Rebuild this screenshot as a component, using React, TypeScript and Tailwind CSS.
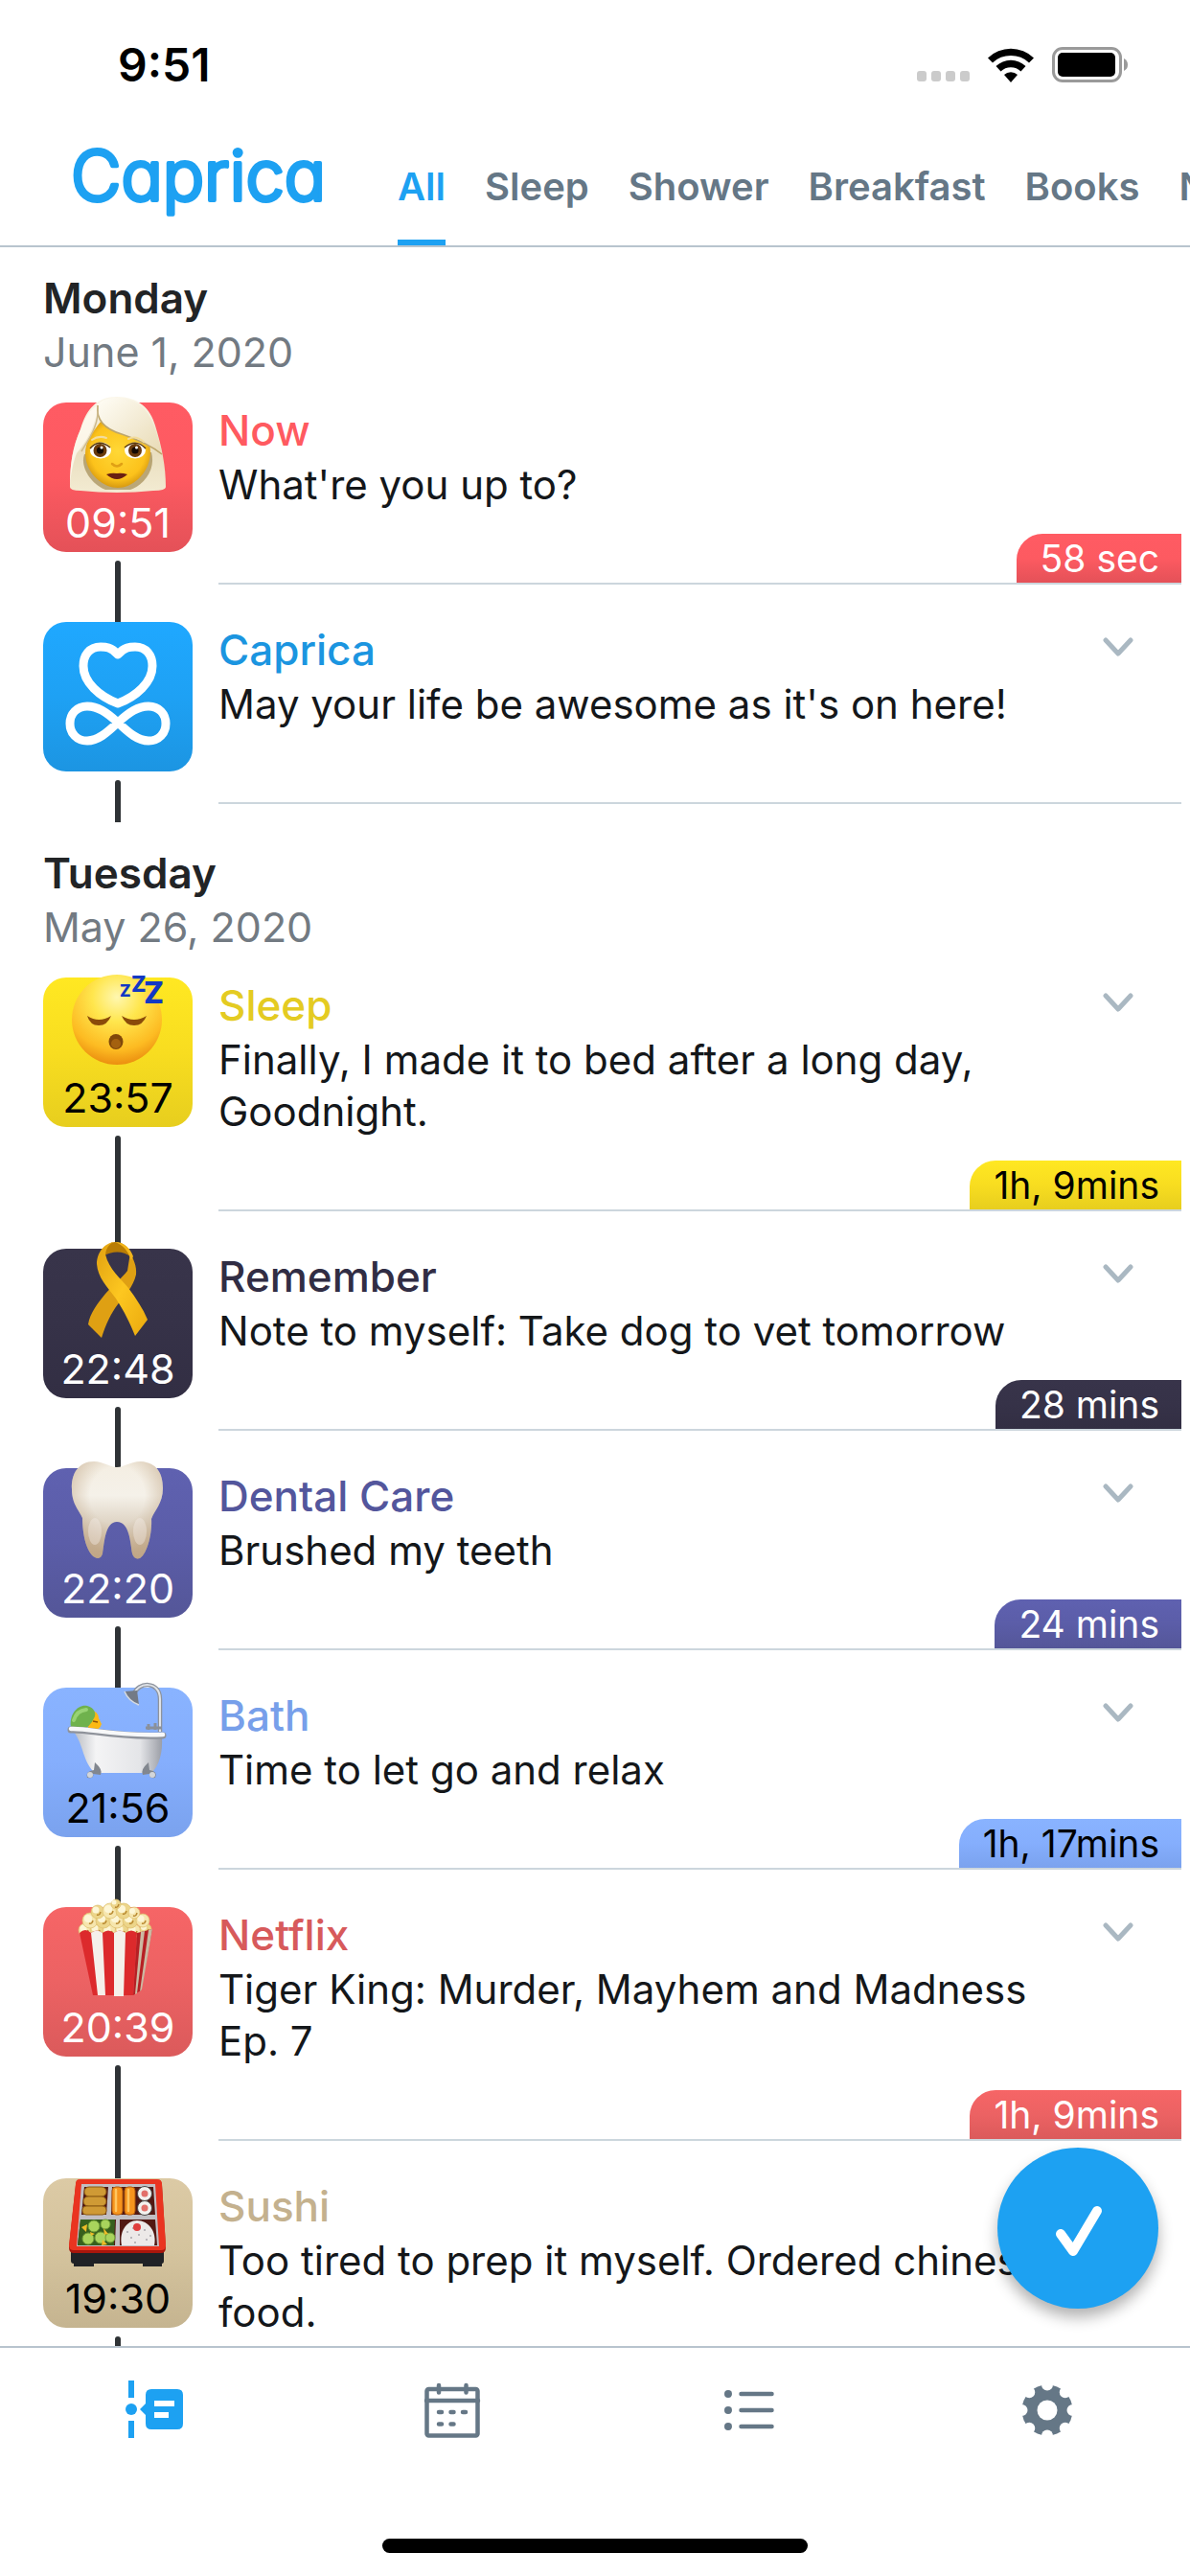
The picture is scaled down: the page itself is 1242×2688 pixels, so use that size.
import React from "react";

type Entry = {
  title: string;
  text: string;
  time?: string;
  badge?: string;
  tile: string;
  titleColor: string;
  expandable?: boolean;
  art: React.ReactNode;
};

const art = "relative -mt-1.5 h-[102px] w-[102px] overflow-visible";

function Woman() {
  return (
    <svg viewBox="0 0 102 102" className={art} aria-hidden="true">
      <defs>
        <linearGradient id="hair" x1="0" y1="0" x2="0" y2="1">
          <stop offset="0" stopColor="#fbf7ea" />
          <stop offset="0.6" stopColor="#eadfc0" />
          <stop offset="1" stopColor="#f3ebd2" />
        </linearGradient>
        <radialGradient id="skin" cx="0.5" cy="0.45" r="0.6">
          <stop offset="0" stopColor="#ffd836" />
          <stop offset="0.7" stopColor="#fcc21b" />
          <stop offset="1" stopColor="#c98a0c" />
        </radialGradient>
        <linearGradient id="fringe" x1="0" y1="0" x2="1" y2="1">
          <stop offset="0" stopColor="#fffdf6" />
          <stop offset="1" stopColor="#e8dab4" />
        </linearGradient>
      </defs>
      <path d="M50 0C72 0 85 12 90 30C97 53 101 72 101 94Q101 98 88 98Q50 102 12 98Q1 98 1 94C1 70 4 52 12 34C18 13 29 0 50 0Z" fill="url(#hair)" />
      <path d="M16 60C11 75 25 92 38 97L64 97C78 92 91 76 86 58Z" fill="#9c8449" opacity="0.65" />
      <path d="M33 26C24 38 17 46 17 60C18 82 37 95 51 95C65 95 83 82 85 60C85 52 84 48 83 43C60 40 43 35 33 26Z" fill="url(#skin)" />
      <path d="M30 9C29 24 22 43 8 59C5 66 2 80 1 92C1 70 4 52 12 34C17 21 22 13 30 9Z" fill="#fffaf0" opacity="0.8" />
      <path d="M30 8C38 -2 65 -2 78 12C89 25 94 44 97 61C88 53 70 44 55 39C39 34 28 24 30 8Z" fill="url(#fringe)" />
      <path d="M30 9C28 24 38 34 55 39C70 44 86 51 97 60" fill="none" stroke="#bda66b" strokeWidth="1.5" />
      <path d="M30 9C32 30 20 45 13 57" fill="none" stroke="#cdb98b" strokeWidth="1.5" />
      <path d="M24 45Q31 40 39 43M62 44Q70 40 78 47" fill="none" stroke="#f3dc9c" strokeWidth="2" strokeLinecap="round" />
      <ellipse cx="33" cy="56" rx="11" ry="8.5" fill="#fff" />
      <ellipse cx="69" cy="56" rx="11" ry="8.5" fill="#fff" />
      <circle cx="32.500" cy="56" r="7" fill="#6b3b0c" />
      <circle cx="69" cy="56" r="7" fill="#6b3b0c" />
      <circle cx="32.500" cy="56" r="3.600" fill="#150a03" />
      <circle cx="69" cy="56" r="3.600" fill="#150a03" />
      <circle cx="34" cy="53" r="1.500" fill="#fff" />
      <circle cx="70.500" cy="53" r="1.500" fill="#fff" />
      <path d="M22 54Q31 43 43 53M58 53Q70 43 80 54" fill="none" stroke="#5a3a0d" strokeWidth="1.500" />
      <path d="M45 70Q50 75 55 70" fill="none" stroke="#e0a015" strokeWidth="2.500" strokeLinecap="round" />
      <path d="M39 81Q45 79 50 80Q55 79 61 81Q50 91 39 81Z" fill="#6a1f12" />
    </svg>
  );
}

function Sleeping() {
  return (
    <svg viewBox="0 0 102 102" className={art} aria-hidden="true">
      <defs>
        <radialGradient id="face" cx="0.5" cy="0.25" r="0.78">
          <stop offset="0" stopColor="#fff7b0" />
          <stop offset="0.35" stopColor="#ffe64d" />
          <stop offset="0.75" stopColor="#fdbb22" />
          <stop offset="1" stopColor="#e8870c" />
        </radialGradient>
      </defs>
      <circle cx="50" cy="50" r="47" fill="url(#face)" />
      <path d="M19 46Q31 54 44 46Q40 56 31 56Q22 56 19 46Z" fill="#8a4b0a" />
      <path d="M55 46Q68 54 81 46Q77 56 68 56Q59 56 55 46Z" fill="#8a4b0a" />
      <ellipse cx="49" cy="73" rx="7.500" ry="8" fill="#80470a" />
      <ellipse cx="49" cy="75" rx="5" ry="5" fill="#a4610f" />
      <g fill="#1238c4" fontFamily="Inter, sans-serif" fontWeight="800">
        <text x="53" y="26" fontSize="17">Z</text>
        <text x="65" y="21" fontSize="23">Z</text>
        <text x="78" y="33" fontSize="31">Z</text>
      </g>
    </svg>
  );
}

function Ribbon() {
  return (
    <svg viewBox="0 0 102 102" className={art} aria-hidden="true">
      <defs>
        <linearGradient id="band" x1="0" y1="0" x2="1" y2="1">
          <stop offset="0" stopColor="#e0a010" />
          <stop offset="0.5" stopColor="#fdc720" />
          <stop offset="1" stopColor="#eaa90e" />
        </linearGradient>
      </defs>
      <path d="M37 11C39 2 43 -1 48 -1C57 -1 64 5 65 15C57 8 46 8 37 13Z" fill="#b97d05" />
      <path d="M64 10C67 17 71 24 70 33C67 46 58 55 51 64C44 73 38 86 34 99L20 85C22 73 30 63 38 53C46 44 55 37 61 29Z" fill="#dfa013" />
      <path d="M48 -1C36 0 29 11 29 22C30 36 40 46 49 58C58 72 64 84 69 97L82 80C77 68 70 58 62 47C54 37 42 28 38 12C39 4 43 0 48 -1Z" fill="url(#band)" />
      <path d="M48 -1C58 -1 64 6 67 14L65 18C61 7 56 2 48 -1Z" fill="#f2b51b" />
    </svg>
  );
}

function Tooth() {
  return (
    <svg viewBox="0 0 102 102" className={art} aria-hidden="true">
      <defs>
        <linearGradient id="enamel" x1="0" y1="0" x2="0" y2="1">
          <stop offset="0" stopColor="#f4eee2" />
          <stop offset="0.35" stopColor="#f5f1e9" />
          <stop offset="0.65" stopColor="#ddd2c2" />
          <stop offset="1" stopColor="#c9b296" />
        </linearGradient>
        <radialGradient id="crown" cx="0.5" cy="0.35" r="0.6">
          <stop offset="0.5" stopColor="#b89b78" stopOpacity="0" />
          <stop offset="1" stopColor="#b89b78" stopOpacity="0.55" />
        </radialGradient>
      </defs>
      <path d="M26 -1C36 -1 42 5 50 5C58 5 64 -1 75 -1C92 0 98 12 98 27C98 43 89 50 86 59C87 73 82 95 74 100Q68 102 66 95C64 83 63 62 50 62C38 62 37 83 35 95Q33 102 27 99C18 94 14 74 14 58C11 50 3 44 3 28C2 12 10 -1 26 -1Z" fill="url(#enamel)" />
      <path d="M26 -1C36 -1 42 5 50 5C58 5 64 -1 75 -1C92 0 98 12 98 27C98 43 89 50 86 59C87 73 82 95 74 100Q68 102 66 95C64 83 63 62 50 62C38 62 37 83 35 95Q33 102 27 99C18 94 14 74 14 58C11 50 3 44 3 28C2 12 10 -1 26 -1Z" fill="url(#crown)" />
      <ellipse cx="27" cy="72" rx="7" ry="14" fill="#f4eee8" opacity="0.4" />
      <ellipse cx="74" cy="72" rx="7" ry="14" fill="#f4eee8" opacity="0.4" />
    </svg>
  );
}

function Bathtub() {
  return (
    <svg viewBox="0 0 102 102" className={art} aria-hidden="true">
      <defs>
        <linearGradient id="tub" x1="0" y1="0" x2="1" y2="0">
          <stop offset="0" stopColor="#b9bcc2" />
          <stop offset="0.25" stopColor="#f4f4f5" />
          <stop offset="0.75" stopColor="#e4e5e8" />
          <stop offset="1" stopColor="#9b9ea6" />
        </linearGradient>
      </defs>
      <path d="M95 52V18C95 -2 71 0 68 13" fill="none" stroke="#8d939d" strokeWidth="4.500" />
      <path d="M95 52V18C95 -2 71 0 68 13" fill="none" stroke="#dfe3e8" strokeWidth="2" />
      <path d="M58 10L71 9L73 24Q62 20 58 10Z" fill="#737a86" />
      <path d="M58 10Q62 20 73 24" fill="none" stroke="#d5dae0" strokeWidth="1.500" />
      <path d="M80 48H97M83 44V50M90 43V50" stroke="#8a909a" strokeWidth="3" />
      <path d="M19 31Q30 28 31 38L34 44Q32 52 20 50Z" fill="#fcb914" />
      <path d="M2 47C0 33 10 23 19 25C27 27 29 34 26 38Q22 47 14 50Z" fill="#6fb24d" />
      <path d="M5 40Q8 30 18 29" fill="none" stroke="#98d374" strokeWidth="4" strokeLinecap="round" />
      <path d="M25 41L30 42" stroke="#8a5208" strokeWidth="1.500" />
      <path d="M5 52L97 57C98 74 94 88 86 95H27C14 83 16 67 5 52Z" fill="url(#tub)" />
      <path d="M2 50C22 49 45 58 98 56" fill="none" stroke="#8f939b" strokeWidth="7" strokeLinecap="round" />
      <path d="M2 49C22 48 45 57 98 55" fill="none" stroke="#f7f8f9" strokeWidth="4.500" strokeLinecap="round" />
      <path d="M27 84Q36 92 33 97L25 96Q27 101 19 100Q17 93 26 92ZM83 84Q74 92 77 97L84 96Q83 101 90 100Q93 93 84 92Z" fill="#82878f" />
      <circle cx="22" cy="97" r="3" fill="#d3d6da" />
      <circle cx="87" cy="97" r="3" fill="#d3d6da" />
    </svg>
  );
}

const kernels: [number, number, number][] = [
  [17, 30, 7], [29, 30, 7], [42, 31, 7], [55, 31, 7], [68, 31, 7], [80, 29, 6],
  [22, 20, 8], [36, 20, 8], [50, 20, 8], [64, 20, 8], [77, 20, 7],
  [30, 11, 7], [43, 10, 8], [57, 10, 8], [68, 12, 6], [49, 3, 5],
];

function Popcorn() {
  return (
    <svg viewBox="0 0 102 102" className={art} aria-hidden="true">
      {kernels.map(([x, y, r], i) => (
        <g key={i}>
          <circle cx={x} cy={y} r={r} fill={i % 2 ? "#ecd58a" : "#f6e6ae"} stroke="#dcbf6c" strokeWidth="0.700" />
          <circle cx={x - 2} cy={y - 2} r={r / 2} fill="#fdf6d6" />
          <path d={`M${x - 1} ${y + 3}q3 1 4 -3`} fill="none" stroke="#b98a32" strokeWidth="1.500" />
        </g>
      ))}
      <path d="M11 33Q17 27 23 33Q29 28 35 33Q41 28 47 33Q53 28 59 33Q65 28 71 33L67 98H25Z" fill="#dc2a2c" />
      <path d="M23 33Q29 28 35 33L38 98H30ZM47 33Q53 28 59 33L57 99H47Z" fill="#f5f0ea" />
      <path d="M71 33L87 29L75 93L67 98Z" fill="#b62024" />
      <path d="M75 32L79 31L71 96L69 97ZM83 30L87 29L76 92L74 94Z" fill="#cbb9a2" />
    </svg>
  );
}

function Bento() {
  return (
    <svg viewBox="0 0 102 102" className={art} aria-hidden="true">
      <path d="M2 80H99V92Q99 95 97 95V98H77V95H26V98H5V95Q2 95 2 92Z" fill="#202226" />
      <path d="M11 8H92Q97 8 97 13L101 78Q101 84 96 84H5Q0 84 0 78L7 13Q7 8 11 8Z" fill="#a8160c" />
      <path d="M11 7H92Q97 7 97 12L101 76Q101 81 96 81H5Q0 81 0 76L7 12Q7 7 11 7Z" fill="#ea3420" />
      <path d="M13 12H90L94 77H8Z" fill="#c2bfc3" />
      <path d="M16 15H41L39 44H13ZM45 15H88L90 44H44ZM12 49H49L48 76H9ZM53 49H90L92 76H53Z" fill="#521812" />
      <g fill="#cf9a35" stroke="#8c5a12" strokeWidth="1">
        <rect x="16" y="15" width="23" height="10" rx="5" />
        <rect x="15" y="25" width="24" height="10" rx="5" />
        <rect x="14" y="35" width="25" height="9" rx="4" />
      </g>
      <g fill="#f6941d" stroke="#b35a0c" strokeWidth="1">
        <rect x="45" y="15" width="11" height="29" rx="4" />
        <rect x="58" y="15" width="11" height="29" rx="4" />
      </g>
      <path d="M49 18V40M62 18V40" stroke="#ffc660" strokeWidth="2.500" strokeLinecap="round" />
      <circle cx="79" cy="22" r="7.500" fill="#f3f1ee" stroke="#4a4a48" />
      <circle cx="79" cy="22" r="3.500" fill="#e2706a" />
      <circle cx="79" cy="37" r="7.500" fill="#f3f1ee" stroke="#4a4a48" />
      <circle cx="79" cy="37" r="3.500" fill="#e2706a" />
      <path d="M12 49H48L47 76H9Z" fill="#37601d" />
      <g fill="#a9d45c" stroke="#6f9c35" strokeWidth="1">
        <circle cx="26" cy="56" r="6" />
        <circle cx="38" cy="54" r="5" />
        <circle cx="20" cy="69" r="6" />
        <circle cx="33" cy="68" r="6" />
        <circle cx="43" cy="68" r="5" />
      </g>
      <path d="M13 57L19 54L18 62ZM36 58L41 64L37 65ZM35 70L40 75L34 76ZM22 62L27 64L23 66Z" fill="#eebc28" />
      <path d="M55 76C52 62 60 50 71 50C83 50 92 62 89 76Z" fill="#ece9e8" />
      <path d="M60 62H62M66 58H68M78 60H80M64 68H66M72 65H74M80 70H82M68 73H70M84 66H86" stroke="#b9b6ba" strokeWidth="2" />
      <circle cx="71" cy="57" r="4" fill="#e03c3c" />
    </svg>
  );
}

function CapricaMark() {
  return (
    <svg viewBox="0 0 156 156" className="h-[156px] w-[156px]" fill="none" stroke="#fff" strokeWidth="9" strokeLinejoin="round" aria-hidden="true">
      <path d="M78 34C71 26 65 26 60 26C48 26 42 35 42 46C42 63 59 78 78 85C97 78 114 63 114 46C114 35 108 26 96 26C91 26 85 26 78 34Z" />
      <path d="M78 105C66 94 57 88 46 88C35 88 28 96 28 106C28 116 35 124 46 124C57 124 66 116 78 105C90 94 99 88 110 88C121 88 128 96 128 106C128 116 121 124 110 124C99 124 90 116 78 105Z" />
    </svg>
  );
}

const sections: { day: string; date: string; entries: Entry[] }[] = [
  {
    day: "Monday",
    date: "June 1, 2020",
    entries: [
      { title: "Now", text: "What're you up to?", time: "09:51", badge: "58 sec", tile: "from-[#ff5b63] via-[#fd5a61] to-[#e45158] text-white", titleColor: "text-[#ff5a60]", art: <Woman /> },
      { title: "Caprica", text: "May your life be awesome as it's on here!", tile: "from-[#1fa8ff] via-[#1ea1f4] to-[#1c95e2] text-white", titleColor: "text-[#1b95e0]", expandable: true, art: <CapricaMark /> },
    ],
  },
  {
    day: "Tuesday",
    date: "May 26, 2020",
    entries: [
      { title: "Sleep", text: "Finally, I made it to bed after a long day, Goodnight.", time: "23:57", badge: "1h, 9mins", tile: "from-[#ffe822] via-[#f8dd20] to-[#e7ce1e] text-black", titleColor: "text-[#e4cb22]", expandable: true, art: <Sleeping /> },
      { title: "Remember", text: "Note to myself: Take dog to vet tomorrow", time: "22:48", badge: "28 mins", tile: "from-[#38344a] via-[#363248] to-[#322e43] text-white", titleColor: "text-[#312d44]", expandable: true, art: <Ribbon /> },
      { title: "Dental Care", text: "Brushed my teeth", time: "22:20", badge: "24 mins", tile: "from-[#5f61b0] via-[#5b5da8] to-[#545698] text-white", titleColor: "text-[#53569c]", expandable: true, art: <Tooth /> },
      { title: "Bath", text: "Time to let go and relax", time: "21:56", badge: "1h, 17mins", tile: "from-[#89b3ff] via-[#85aefd] to-[#7aa2ee] text-black", titleColor: "text-[#779fea]", expandable: true, art: <Bathtub /> },
      { title: "Netflix", text: "Tiger King: Murder, Mayhem and Madness Ep. 7", time: "20:39", badge: "1h, 9mins", tile: "from-[#f66566] via-[#ec6263] to-[#db5a5b] text-white", titleColor: "text-[#d75a5b]", expandable: true, art: <Popcorn /> },
      { title: "Sushi", text: "Too tired to prep it myself. Ordered chinese food.", time: "19:30", tile: "from-[#dccaa5] via-[#d4c39d] to-[#c5b490] text-black", titleColor: "text-[#c4b18e]", art: <Bento /> },
    ],
  },
];

const tabs = ["All", "Sleep", "Shower", "Breakfast", "Books", "Netflix"];

function StatusBar() {
  return (
    <div className="flex h-[137px] items-start justify-between pt-[39px] pr-16 pl-[123px]">
      <span className="text-[48px] leading-[58px] font-semibold text-black">9:51</span>
      <div className="flex items-end gap-[19px] pt-2.5">
        <div className="flex gap-[5px] pb-px">
          {[0, 1, 2, 3].map((i) => (
            <span key={i} className="h-[11px] w-2.5 rounded-[3px] bg-[#cbcbcb]" />
          ))}
        </div>
        <svg viewBox="0 0 48 36" className="h-9 w-12" aria-label="Wi-Fi">
          <path d="M0 10.500A34.500 34.500 0 0 1 48 10.500L43 15.500A27.500 27.500 0 0 0 5 15.500Z" />
          <path d="M8.500 19A22.500 22.500 0 0 1 39.500 19L34.500 24.500A15 15 0 0 0 13.500 24.500Z" />
          <path d="M17 28A10 10 0 0 1 31 28L24 36Z" />
        </svg>
        <svg viewBox="0 0 80 37" className="h-[37px] w-20" aria-label="Battery full">
          <rect x="1.500" y="1.500" width="70" height="34" rx="9.500" fill="none" stroke="#9a9a9a" strokeWidth="3" />
          <rect x="6" y="6" width="60" height="25" rx="5" fill="#000" />
          <path d="M75 12Q79 14 79 18.500Q79 23 75 25Z" fill="#9a9a9a" />
        </svg>
      </div>
    </div>
  );
}

function Line({ className }: { className: string }) {
  return <span className={`w-1.5 bg-[#2f3336] ${className}`} />;
}

function TimelineRow({ entry, first }: { entry: Entry; first: boolean }) {
  return (
    <li className="flex gap-[27px] pr-[9px] pl-[45px]">
      <div className="flex w-[156px] shrink-0 flex-col items-center">
        <Line className={first ? "invisible h-5" : "h-5"} />
        <div className={`flex h-[156px] w-full flex-col items-center rounded-3xl bg-linear-to-b ${entry.tile}`}>
          {entry.art}
          {entry.time && <time className="mt-0.5 text-[43px] leading-[54px]">{entry.time}</time>}
        </div>
        <Line className="mt-[9px] flex-1 rounded-t-full" />
      </div>
      <div className="flex-1 pt-5 pb-[19px]">
        <div className="flex flex-col border-b-2 border-[#ccd6dd]">
          <div className="flex justify-between pt-0.5 pb-6">
            <div className="max-w-[880px] leading-[54px]">
              <h3 className={`mb-[3px] text-[44px] font-medium ${entry.titleColor}`}>{entry.title}</h3>
              <p className="text-[42px] text-[#14171a]">{entry.text}</p>
            </div>
            {entry.expandable && (
              <button aria-label={`More about ${entry.title}`} className="mt-[14px] mr-[50px] self-start">
                <svg viewBox="0 0 32 20" className="h-5 w-8" fill="none" stroke="#aab8c2" strokeWidth="5" strokeLinecap="round" strokeLinejoin="round">
                  <path d="M3 3L16 17L29 3" />
                </svg>
              </button>
            )}
          </div>
          <div className="flex h-[51px] justify-end">
            {entry.badge && (
              <span className={`rounded-tl-[27px] bg-linear-to-b pr-[23px] pl-[25px] text-[39px] leading-[51px] ${entry.tile}`}>{entry.badge}</span>
            )}
          </div>
        </div>
      </div>
    </li>
  );
}

function TabBar() {
  const item = "flex flex-1 items-start justify-center pt-[34px] pl-3";
  return (
    <nav className="flex h-[201px] shrink-0 border-t-2 border-[#b8c4ce] bg-white text-[#657786]">
      <button aria-label="Timeline" className={item}>
        <svg viewBox="0 0 60 60" className="h-[60px] w-[60px]" fill="#1da1f2">
          <path d="M3 0H9V18H3ZM3 42H9V60H3Z" />
          <circle cx="6" cy="30" r="6" />
          <path fillRule="evenodd" d="M27 9H54Q60 9 60 15V45Q60 51 54 51H27Q21 51 21 45V36L15 30L21 24V15Q21 9 27 9ZM30 21V27H51V21ZM30 33V39H45V33Z" />
        </svg>
      </button>
      <button aria-label="Calendar" className={item}>
        <svg viewBox="0 0 60 60" className="h-[60px] w-[60px]" fill="none" stroke="currentColor" strokeWidth="4.500" strokeLinecap="round" strokeLinejoin="round">
          <rect x="3.500" y="9" width="53" height="48.500" rx="2" />
          <path d="M3 21H57M16 5V12.500M44.500 5V12.500M16 33H19M28.500 33H31.500M41 33H44M16 45.500H19M28.500 45.500H31.500" />
        </svg>
      </button>
      <button aria-label="List" className={item}>
        <svg viewBox="0 0 60 60" className="h-[60px] w-[60px]" fill="currentColor">
          <circle cx="8" cy="14" r="4" />
          <circle cx="8" cy="31" r="4" />
          <circle cx="8" cy="48" r="4" />
          <path d="M21.500 14H53.500M21.500 31H53.500M21.500 48H53.500" stroke="currentColor" strokeWidth="4.500" strokeLinecap="round" />
        </svg>
      </button>
      <button aria-label="Settings" className={item}>
        <svg viewBox="0 0 60 60" className="h-[60px] w-[60px]">
          <mask id="gear">
            <circle cx="30" cy="31" r="26.500" fill="#fff" />
            <circle cx="30" cy="31" r="10.500" fill="#000" />
            {[0, 45, 90, 135, 180, 225, 270, 315].map((a) => (
              <circle key={a} cx="30" cy="4.500" r="6" fill="#000" transform={`rotate(${a} 30 31)`} />
            ))}
          </mask>
          <rect width="60" height="60" fill="currentColor" mask="url(#gear)" />
        </svg>
      </button>
    </nav>
  );
}

export default function App() {
  return (
    <div className="flex h-screen flex-col overflow-hidden bg-white font-[Inter,'Noto_Sans',sans-serif]">
      <header className="shrink-0 border-b-2 border-[#b8c4ce]">
        <StatusBar />
        <div className="flex h-[119px] items-end">
          <svg viewBox="0 0 270 90" className="mb-[27px] ml-[73px] h-[90px] w-[270px] shrink-0 overflow-visible" role="img" aria-label="Caprica">
            <text x="1" y="70" fontFamily="Inter, sans-serif" fontWeight="300" fontSize="72" fill="#1da1f2" stroke="#1da1f2" strokeWidth="4" strokeLinecap="round" strokeLinejoin="round" style={{ fontFeatureSettings: "'cv11'" }}>Caprica</text>
          </svg>
          <nav className="ml-[72px] flex flex-1 gap-[41px] overflow-hidden">
            {tabs.map((tab, i) => (
              <button
                key={tab}
                className={`shrink-0 border-b-[6px] pb-[29px] text-[40px] leading-[52px] font-semibold ${i === 0 ? "border-[#1da1f2] text-[#1da1f2]" : "border-transparent text-[#657786]"}`}
              >
                {tab}
              </button>
            ))}
          </nav>
        </div>
      </header>

      <main className="relative min-h-0 flex-1">
        <div className="h-full overflow-hidden">
          {sections.map((section) => (
            <section key={section.day}>
              <div className="pt-[26px] pb-1.5 pl-[45px] leading-[54px]">
                <h2 className="mb-0.5 text-[44px] font-semibold text-[#222426]">{section.day}</h2>
                <p className="text-[43px] text-[#727a82]">{section.date}</p>
              </div>
              <ol>
                {section.entries.map((entry, i) => (
                  <TimelineRow key={entry.title} entry={entry} first={i === 0} />
                ))}
              </ol>
            </section>
          ))}
        </div>
        <button aria-label="Check in" className="absolute right-[33px] bottom-[39px] flex h-[168px] w-[168px] items-center justify-center rounded-full bg-[#1da1f2] shadow-[0_9px_15px_rgba(0,0,0,0.3)]">
          <svg viewBox="0 0 168 168" className="h-[168px] w-[168px]" fill="none" stroke="#fff" strokeWidth="10" strokeLinecap="round" strokeLinejoin="round">
            <path d="M66 90L79 108L104 66" />
          </svg>
        </button>
      </main>

      <TabBar />
      <div className="flex h-[39px] shrink-0 justify-center bg-white">
        <span className="h-[15px] w-[444px] rounded-full bg-black" />
      </div>
    </div>
  );
}
